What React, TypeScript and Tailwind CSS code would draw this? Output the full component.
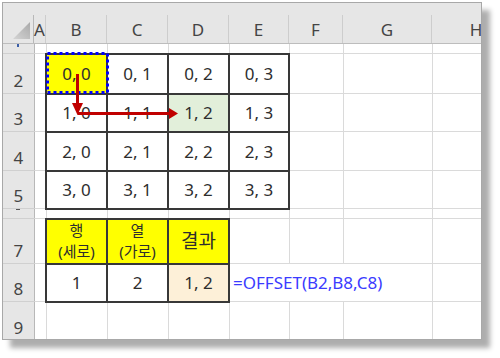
import React from 'react';

const grid = 'border border-[#dadada]';
const box = 'border-2 border-[#383838]';

function ColHead({ label }: { label: string }) {
  return (
    <th className="p-0 bg-[#e6e6e6] border-b border-[#bdbdbd] font-normal">
      <div className="h-[40px] flex flex-col">
        <div className="h-[12px]" />
        <div className="flex-1 border-r border-[#cdcdcd] flex items-center justify-center text-[17px] leading-none text-[#444]">
          {label}
        </div>
      </div>
    </th>
  );
}

function RowHead({ children }: { children?: React.ReactNode }) {
  return (
    <td className="p-0 bg-[#e6e6e6] border-b border-[#d0d0d0] border-r border-r-[#b8b8b8] text-center align-bottom pb-[4px] text-[17px] leading-none text-[#444]">
      {children}
    </td>
  );
}

function Cell({ v, cls = box, bg = '' }: { v?: string; cls?: string; bg?: string }) {
  return <td className={`p-0 text-center align-middle text-[17px] leading-none text-[#2e2e2e] ${cls} ${bg}`}>{v}</td>;
}

const rows = [
  ['0, 0', '0, 1', '0, 2', '0, 3'],
  ['1, 0', '1, 1', '1, 2', '1, 3'],
  ['2, 0', '2, 1', '2, 2', '2, 3'],
  ['3, 0', '3, 1', '3, 2', '3, 3'],
];
const heights = ['h-[40px]', 'h-[38px]', 'h-[39px]', 'h-[38px]'];

export default function App() {
  return (
    <div className="relative w-[500px] h-[358px] bg-white overflow-hidden font-['Noto_Sans','Noto_Sans_CJK_KR',sans-serif]">
      <div className="ml-[2px] mt-[2px] w-[480px] h-[338px] border border-[#a8a8a8] bg-white overflow-hidden shadow-[8px_8px_5px_rgba(0,0,0,0.32)]">
        <table className="table-fixed w-[518px]">
          <colgroup>
            <col className="w-[31px]" />
            <col className="w-[12px]" />
            <col className="w-[61px]" />
            <col className="w-[61px]" />
            <col className="w-[61px]" />
            <col className="w-[60px]" />
            <col className="w-[54px]" />
            <col className="w-[89px]" />
            <col className="w-[89px]" />
          </colgroup>
          <thead>
            <tr>
              <th className="p-0 bg-[#e6e6e6] border-b border-[#bdbdbd] font-normal">
                <div className="h-[40px] flex flex-col">
                  <div className="h-[12px]" />
                  <div className="flex-1 border-r border-[#b8b8b8] flex items-end justify-end pr-[2px] pb-[4px]">
                    <svg width="18" height="17" viewBox="0 0 18 17">
                      <defs>
                        <linearGradient id="tri" x1="0" y1="1" x2="1" y2="0">
                          <stop offset="0" stopColor="#d4d4d4" />
                          <stop offset="1" stopColor="#a9a9a9" />
                        </linearGradient>
                      </defs>
                      <polygon points="0,17 17,17 17,0" fill="url(#tri)" />
                    </svg>
                  </div>
                </div>
              </th>
              {['A', 'B', 'C', 'D', 'E', 'F', 'G', 'H'].map((c) => (
                <ColHead key={c} label={c} />
              ))}
            </tr>
          </thead>
          <tbody>
            <tr className="h-[10px]">
              <RowHead>
                <div className="mx-auto w-[2px] h-[3px] bg-[#3b5fa8] mb-[2px]" />
              </RowHead>
              {Array.from({ length: 8 }).map((_, i) => (
                <Cell key={i} cls={grid} />
              ))}
            </tr>
            {rows.map((r, ri) => (
              <tr key={ri} className={heights[ri]}>
                <RowHead>{ri + 2}</RowHead>
                <Cell cls={grid} />
                {r.map((v, ci) => (
                  <Cell
                    key={ci}
                    v={v}
                    bg={ri === 0 && ci === 0 ? 'bg-[#ffff00]' : ri === 1 && ci === 2 ? 'bg-[#e2efda]' : ''}
                  />
                ))}
                <Cell cls={grid} />
                <Cell cls={grid} />
                <Cell cls={grid} />
              </tr>
            ))}
            <tr className="h-[9px]">
              <RowHead>
                <div className="mx-auto w-[4px] h-[1px] bg-[#555] mb-[4px]" />
              </RowHead>
              {Array.from({ length: 8 }).map((_, i) => (
                <Cell key={i} cls={grid} />
              ))}
            </tr>
            <tr className="h-[45px]">
              <RowHead>7</RowHead>
              <Cell cls={grid} />
              <td className={`p-0 text-center align-middle bg-[#ffff00] text-[#2e2e2e] ${box}`}>
                <div className="text-[15px] leading-[21px]">행</div>
                <div className="text-[15px] leading-[21px]">(세로)</div>
              </td>
              <td className={`p-0 text-center align-middle bg-[#ffff00] text-[#2e2e2e] ${box}`}>
                <div className="text-[15px] leading-[21px]">열</div>
                <div className="text-[15px] leading-[21px]">(가로)</div>
              </td>
              <td className={`p-0 text-center align-middle bg-[#ffff00] text-[#2e2e2e] text-[19px] leading-none ${box}`}>결과</td>
              <Cell cls={grid} />
              <Cell cls={grid} />
              <Cell cls={grid} />
              <Cell cls={grid} />
            </tr>
            <tr className="h-[38px]">
              <RowHead>8</RowHead>
              <Cell cls={grid} />
              <Cell v="1" />
              <Cell v="2" />
              <Cell v="1, 2" bg="bg-[#fdf0d8]" />
              <td colSpan={3} className={`p-0 pl-[3px] align-middle whitespace-nowrap text-[17px] leading-none text-[#3b3bff] ${grid}`}>
                =OFFSET(B2,B8,C8)
              </td>
              <Cell cls={grid} />
            </tr>
            <tr className="h-[39px]">
              <RowHead>9</RowHead>
              {Array.from({ length: 8 }).map((_, i) => (
                <Cell key={i} cls={grid} />
              ))}
            </tr>
          </tbody>
        </table>
      </div>

      {/* copy marquee on B2 and red path arrow */}
      <svg className="absolute left-0 top-0 pointer-events-none" width="500" height="358">
        <rect x="47.5" y="53.5" width="60" height="39" fill="none" stroke="#0000ff" strokeWidth="3" strokeDasharray="3 3" />
        <path d="M77.5 74 V106" stroke="#c00000" strokeWidth="3" fill="none" />
        <polygon points="72,103 83,103 77.5,115" fill="#c00000" />
        <path d="M77.5 113.5 H171" stroke="#c00000" strokeWidth="3" fill="none" />
        <polygon points="169,108 169,119 178,113.5" fill="#c00000" />
      </svg>
    </div>
  );
}
